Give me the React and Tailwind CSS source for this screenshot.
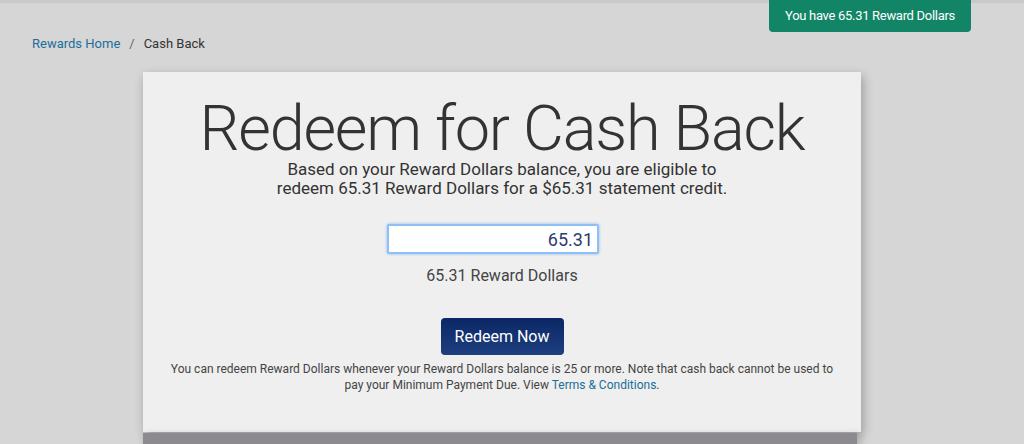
export default function App() {
  return (
    <div className="relative h-[444px] overflow-hidden bg-[#d6d6d6] font-['Roboto',sans-serif]">
      {/* top strip */}
      <div className="h-[3px] bg-[#c9c9c9]" />

      {/* balance badge */}
      <div className="absolute left-[769px] top-0 flex h-[32px] w-[202px] items-center justify-center rounded-b-[4px] bg-[#128566] text-[13px] tracking-[-0.3px] text-white">
        You have 65.31 Reward Dollars
      </div>

      {/* breadcrumb */}
      <nav className="flex items-center gap-[9px] pl-[32px] pt-[33px] text-[13px] leading-[16px]">
        <a className="text-[#1b6e99]">Rewards Home</a>
        <span className="text-[#666]">/</span>
        <span className="text-[#333]">Cash Back</span>
      </nav>

      {/* main card */}
      <div className="ml-[143px] mt-[20px] w-[718px] bg-[#efefef] shadow-[2px_4px_10px_rgba(0,0,0,0.28)]">
        <div className="flex flex-col items-center pb-[39px] pt-[26px] text-[#333]">
          <h1 className="text-[63px] font-light leading-[62px] tracking-[-1.2px] text-[#333]">
            Redeem for Cash Back
          </h1>
          <p className="text-center text-[17px] leading-[19px] text-[#333]">
            Based on your Reward Dollars balance, you are eligible to
            <br />
            redeem 65.31 Reward Dollars for a $65.31 statement credit.
          </p>

          <input
            readOnly
            value="65.31"
            className="mr-[18px] mt-[26px] h-[30px] w-[212px] rounded-[2px] border-2 border-[#8fc0f5] bg-white px-[4px] text-right text-[18px] text-[#2c3e6e] shadow-[0_0_3px_rgba(90,160,240,0.7)] outline-none"
          />
          <div className="mt-[12px] text-[16px] leading-[20px] text-[#444]">65.31 Reward Dollars</div>

          <button className="mt-[32px] h-[37px] w-[123px] rounded-[4px] bg-gradient-to-b from-[#0b2765] to-[#1e3f80] text-[16px] text-white">
            Redeem Now
          </button>

          <p className="mt-[6px] text-center text-[12px] leading-[16px] text-[#444]">
            You can redeem Reward Dollars whenever your Reward Dollars balance is 25 or more. Note that cash back cannot be used to
            <br />
            pay your Minimum Payment Due. View <a className="text-[#1b6e99]">Terms &amp; Conditions</a>.
          </p>
        </div>
      </div>

      {/* next section peeking below */}
      <div className="ml-[143px] mt-[1px] h-[30px] w-[714px] bg-[#8c8a8e] shadow-[2px_2px_8px_rgba(0,0,0,0.2)]" />
    </div>
  );
}
